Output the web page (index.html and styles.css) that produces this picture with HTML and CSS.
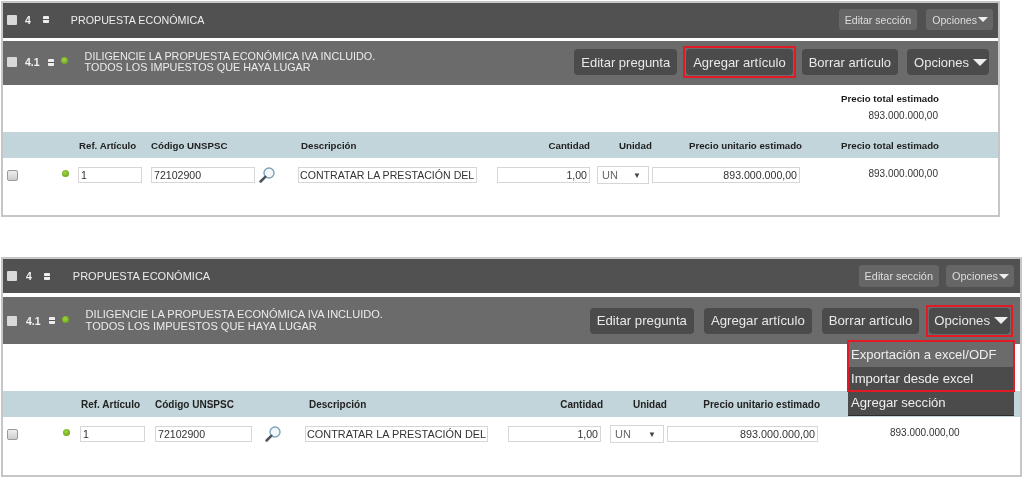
FILE: index.html
```html
<!DOCTYPE html>
<html lang="es">
<head>
<meta charset="utf-8">
<title>Propuesta económica</title>
<link rel="stylesheet" href="styles.css">
</head>
<body>
<section class="panel panel-a">
  <header class="section-bar">
    <span class="box"></span><b class="num">4</b><span class="toggle"></span>
    <span class="section-title">PROPUESTA ECONÓMICA</span>
    <span class="btn btn-sm">Editar sección</span>
    <span class="btn btn-sm">Opciones<i class="caret"></i></span>
  </header>
  <header class="question-bar">
    <span class="box"></span><b class="num">4.1</b><span class="toggle"></span><span class="dot"></span>
    <span class="question-title">DILIGENCIE LA PROPUESTA ECONÓMICA IVA INCLUIDO.<br>TODOS LOS IMPUESTOS QUE HAYA LUGAR</span>
    <span class="btn">Editar pregunta</span>
    <span class="btn outlined">Agregar artículo</span>
    <span class="btn">Borrar artículo</span>
    <span class="btn btn-menu">Opciones<i class="caret caret-lg"></i></span>
  </header>
  <div class="summary">
    <strong>Precio total estimado</strong>
    <span>893.000.000,00</span>
  </div>
  <div class="grid head">
    <span class="c-ref">Ref. Artículo</span><span>Código UNSPSC</span><span class="c-desc">Descripción</span>
    <span class="c-qty">Cantidad</span><span class="c-unit">Unidad</span><span class="c-price">Precio unitario estimado</span><span class="c-total">Precio total estimado</span>
  </div>
  <div class="grid row">
    <span class="check"></span><span class="dot"></span>
    <input class="field f-ref" value="1" readonly>
    <span class="code"><input class="field f-code" value="72102900" readonly>
      <svg class="lens" viewBox="0 0 16 16"><circle cx="10" cy="6" r="5" fill="#f3f8fc" stroke="#7fa2b8" stroke-width="1.4"/><path d="M6.3 9.8 1.6 14.5" stroke="#4c5257" stroke-width="2.5" stroke-linecap="round"/></svg></span>
    <input class="field f-desc" value="CONTRATAR LA PRESTACIÓN DEL" readonly>
    <input class="field f-qty" value="1,00" readonly>
    <span class="select">UN<i>▼</i></span>
    <input class="field f-price" value="893.000.000,00" readonly>
    <span class="c-total total-val">893.000.000,00</span>
  </div>
</section>

<section class="panel panel-b">
  <header class="section-bar">
    <span class="box"></span><b class="num">4</b><span class="toggle"></span>
    <span class="section-title">PROPUESTA ECONÓMICA</span>
    <span class="btn btn-sm">Editar sección</span>
    <span class="btn btn-sm">Opciones<i class="caret"></i></span>
  </header>
  <header class="question-bar">
    <span class="box"></span><b class="num">4.1</b><span class="toggle"></span><span class="dot"></span>
    <span class="question-title">DILIGENCIE LA PROPUESTA ECONÓMICA IVA INCLUIDO.<br>TODOS LOS IMPUESTOS QUE HAYA LUGAR</span>
    <span class="btn">Editar pregunta</span>
    <span class="btn">Agregar artículo</span>
    <span class="btn">Borrar artículo</span>
    <span class="btn btn-menu outlined">Opciones<i class="caret caret-lg"></i></span>
  </header>
  <div class="summary"></div>
  <div class="grid head">
    <span class="c-ref">Ref. Artículo</span><span>Código UNSPSC</span><span class="c-desc">Descripción</span>
    <span class="c-qty">Cantidad</span><span class="c-unit">Unidad</span><span class="c-price">Precio unitario estimado</span>
  </div>
  <div class="grid row">
    <span class="check"></span><span class="dot"></span>
    <input class="field f-ref" value="1" readonly>
    <span class="code"><input class="field f-code" value="72102900" readonly>
      <svg class="lens" viewBox="0 0 16 16"><circle cx="10" cy="6" r="5" fill="#f3f8fc" stroke="#7fa2b8" stroke-width="1.4"/><path d="M6.3 9.8 1.6 14.5" stroke="#4c5257" stroke-width="2.5" stroke-linecap="round"/></svg></span>
    <input class="field f-desc" value="CONTRATAR LA PRESTACIÓN DEL" readonly>
    <input class="field f-qty" value="1,00" readonly>
    <span class="select">UN<i>▼</i></span>
    <input class="field f-price" value="893.000.000,00" readonly>
    <span class="c-total total-val">893.000.000,00</span>
  </div>
  <ul class="menu">
    <li class="hover">Exportación a excel/ODF</li>
    <li>Importar desde excel</li>
    <li>Agregar sección</li>
  </ul>
  <div class="menu-outline"></div>
</section>
</body>
</html>
```

FILE: styles.css
```css
* { box-sizing: border-box; }
html, body { margin: 0; background: #fff; }
body {
  height: 478px;
  overflow: hidden;
  padding-top: 1px;
  font-family: "Liberation Sans", Arial, sans-serif;
  color: #1c1c1c;
}

/* Panels */
.panel { position: relative; margin-left: 1px; border: 2px solid #c6c6c6; background: #fff; filter: blur(0.3px); }
.panel-a { width: 999px; height: 216px; margin-bottom: 40px; }
.panel-b { width: 1021px; height: 220px; }

/* Bars */
.section-bar, .question-bar { display: flex; align-items: center; color: #ececec; }
.section-bar { height: 35px; padding-bottom: 2px; background: #515151; }
.question-bar { height: 44px; margin-top: 3px; padding-bottom: 2px; background: #6b6b6b; }
.panel-b .section-bar { height: 34px; padding-bottom: 0; }
.panel-b .question-bar { height: 47px; margin-top: 4px; padding-bottom: 0; }

.box { flex: none; width: 10px; height: 10px; margin-left: 4px; background: #d9d9d9; border-radius: 1px; }
.num { margin-left: 8px; font-size: 10.5px; color: #f2f2f2; }
.panel-b .num { margin-left: 9px; }
.toggle {
  flex: none; width: 6px; height: 7px; border-radius: 1px;
  background: linear-gradient(#eee 0 3px, #555 3px 4px, #eee 4px);
}
.section-bar .toggle { margin-left: 12px; }
.question-bar .toggle { margin-left: 8px; }
.question-bar .dot { margin-left: 7px; margin-bottom: 3px; }

.section-title { margin-left: 22px; margin-right: auto; font-size: 10.7px; }
.panel-b .section-title { margin-left: 23px; font-size: 11px; }
.question-title { margin-left: 17px; margin-right: auto; font-size: 10.8px; line-height: 11.5px; }
.panel-b .question-title { font-size: 11.05px; }

.dot {
  flex: none; width: 7px; height: 7px; border-radius: 50%;
  background: radial-gradient(circle at 45% 40%, #a4d644, #6ea51c 75%);
}

/* Buttons */
.btn {
  position: relative; flex: none;
  display: flex; align-items: center; justify-content: center;
  height: 26px; padding: 0 7px; border-radius: 4px;
  background: #4b4b4b; color: #e8e8e8; font-size: 13px;
}
.question-bar .btn + .btn { margin-left: 9px; }
.question-bar .btn-menu { margin-right: 9px; padding-right: 2px; }
.panel-b .question-bar .btn { height: 26px; font-size: 13.2px; }
.panel-b .question-bar .btn + .btn { margin-left: 10px; }
.panel-b .question-bar .btn-menu { margin-left: 14px; margin-right: 10px; padding-left: 5px; padding-right: 2px; }

.btn-sm { height: 21px; padding: 0 6px; border-radius: 3px; background: #666; color: #ddd; font-size: 10.6px; }
.section-bar .btn + .btn { margin-left: 9px; margin-right: 5px; padding-right: 5px; }
.panel-b .section-bar .btn { height: 22px; font-size: 10.9px; }
.panel-b .section-bar .btn + .btn { margin-left: 7px; margin-right: 6px; padding-right: 5px; }

.outlined::after {
  content: ""; position: absolute; inset: -3px;
  border: 2px solid #e01b24;
}

.caret { width: 0; height: 0; margin-left: 1px; border: 5px solid transparent; border-top-color: #eee; border-bottom: 0; }
.caret-lg { margin-left: 4px; border-width: 7px 7px 0; }

/* Summary */
.summary {
  display: flex; flex-direction: column; align-items: flex-end;
  height: 47px; padding-right: 59px; font-size: 9.7px;
}
.summary strong { margin-top: 8px; }
.summary span { margin-top: 6px; padding-right: 1px; color: #333; font-size: 10px; }

/* Table */
.grid { display: grid; align-items: center; }
.panel-a .grid { grid-template-columns: 59px 16px 73px 147px 199px 100px 55px 189px 98px; }
.panel-b .grid { grid-template-columns: 60px 17px 75px 150px 203px 102px 57px 223px 69px; }

.head { height: 26px; background: #c2d5da; color: #222; font-size: 9.7px; font-weight: 700; white-space: nowrap; }
.panel-b .head { font-size: 10px; }
.c-ref { grid-column: 3; padding-left: 1px; }
.c-desc { padding-left: 3px; }
.panel-b .c-desc { padding-left: 4px; }
.c-qty { width: 93px; text-align: right; }
.panel-b .c-qty { width: 95px; }
.c-unit { padding-left: 22px; }
.panel-b .c-unit { padding-left: 23px; }
.c-price { width: 150px; text-align: right; }
.panel-b .c-price { width: 153px; }
.c-total { grid-column: 9; text-align: right; }

.row { height: 34px; }
.check {
  width: 11px; height: 11px; margin-left: 4px;
  border: 1px solid #9a9a9a; border-radius: 2px;
  background: linear-gradient(#eee, #cdcdcd);
}
.row .dot { margin-top: -3px; }
.field {
  display: block; height: 16px; min-width: 0; padding: 0 2px;
  border: 1px solid #d6d6d6; background: #fff; color: #333;
  font: 10.6px "Liberation Sans", Arial, sans-serif;
}
.f-ref { width: 64px; }
.panel-b .f-ref { width: 65px; }
.code { display: flex; align-items: center; }
.f-code { width: 104px; }
.panel-b .f-code { width: 97px; }
.lens { flex: none; width: 16px; height: 16px; margin-left: 4px; }
.panel-b .lens { margin-left: 13px; }
.f-desc { width: 179px; padding: 0 1px; font-size: 10.6px; }
.panel-b .f-desc { width: 183px; font-size: 10.9px; }
.f-qty { width: 93px; text-align: right; }
.f-price { width: 148px; text-align: right; }
.panel-b .f-price { width: 151px; font-size: 10.8px; }
.select {
  display: flex; align-items: center; justify-content: space-between;
  width: 52px; height: 18px; padding: 0 7px 0 4px;
  border: 1px solid #d6d6d6; color: #666; font-size: 11px;
}
.panel-b .select { width: 54px; }
.select i { color: #444; font-size: 8px; font-style: normal; }
.total-val { margin-top: -3px; padding-right: 1px; color: #333; font-size: 10px; }

/* Options menu */
.menu {
  position: absolute; top: 84px; right: 6px; width: 166px; margin: 0; padding: 0;
  list-style: none; background: #4b4b4b; color: #eee; font-size: 13.1px;
  border-bottom: 1px solid #2c2c2c;
}
.menu li { height: 24px; padding-left: 3px; line-height: 23px; }
.menu li.hover { background: #6b6b6b; }
.menu-outline { position: absolute; top: 81px; right: 5px; width: 168px; height: 52px; border: 2px solid #e01b24; }
```
